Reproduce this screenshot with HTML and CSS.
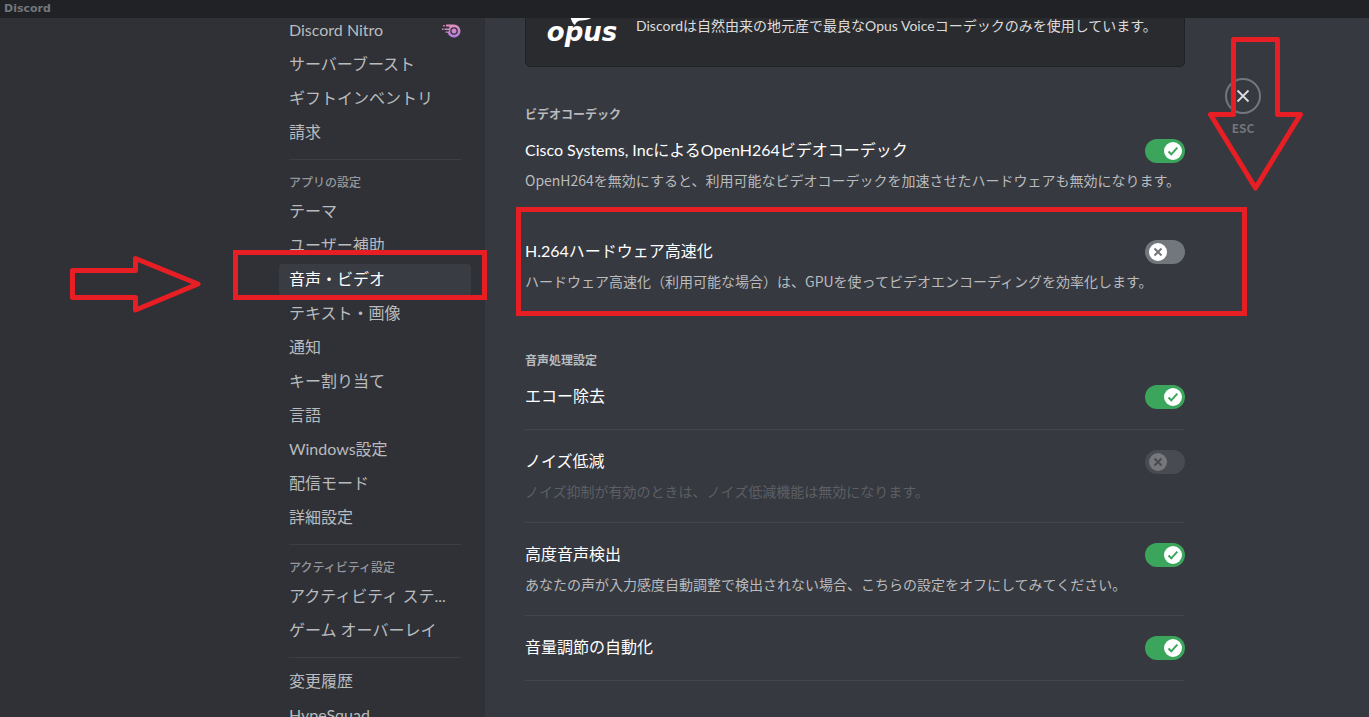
FILE: index.html
```html
<!DOCTYPE html>
<html lang="ja">
<head>
<meta charset="utf-8">
<meta name="viewport" content="width=device-width, initial-scale=1">
<title>Discord</title>
<link rel="stylesheet" href="styles.css">
</head>
<body>
<header class="titlebar">Discord</header>
<div class="settings">
  <aside class="sidebar">
    <nav class="nav">
      <a class="nav-item" href="#"><span class="nav-label">Discord Nitro</span>
        <svg class="nitro" width="20" height="16" viewBox="0 0 20 16" aria-hidden="true">
          <defs><linearGradient id="nitro" x1="0" y1="0" x2="0" y2="1"><stop offset="0" stop-color="#e292bb"/><stop offset="1" stop-color="#b57be0"/></linearGradient></defs>
          <path fill="url(#nitro)" fill-rule="evenodd" d="M5 1.500h8a6.500 6.500 0 1 1-6.300 8.200H4.500V8.500h3.300V7H3.500V5.500h4.800V3.500H5zM13 4.200a3.800 3.800 0 1 0 0 7.600 3.800 3.800 0 0 0 0-7.600zM13 5.500a2.500 2.500 0 1 1 0 5 2.500 2.500 0 0 1 0-5zM1 5.500h1.500V7H1zM2.200 2h1.600v1.500H2.200z"/>
        </svg></a>
      <a class="nav-item" href="#"><span class="nav-label">サーバーブースト</span></a>
      <a class="nav-item" href="#"><span class="nav-label">ギフトインベントリ</span></a>
      <a class="nav-item" href="#"><span class="nav-label">請求</span></a>
      <hr class="nav-rule">
      <h2 class="nav-heading">アプリの設定</h2>
      <a class="nav-item" href="#"><span class="nav-label">テーマ</span></a>
      <a class="nav-item" href="#"><span class="nav-label">ユーザー補助</span></a>
      <a class="nav-item active" href="#" aria-current="page"><span class="nav-label">音声・ビデオ</span></a>
      <a class="nav-item" href="#"><span class="nav-label">テキスト・画像</span></a>
      <a class="nav-item" href="#"><span class="nav-label">通知</span></a>
      <a class="nav-item" href="#"><span class="nav-label">キー割り当て</span></a>
      <a class="nav-item" href="#"><span class="nav-label">言語</span></a>
      <a class="nav-item" href="#"><span class="nav-label">Windows設定</span></a>
      <a class="nav-item" href="#"><span class="nav-label">配信モード</span></a>
      <a class="nav-item" href="#"><span class="nav-label">詳細設定</span></a>
      <hr class="nav-rule">
      <h2 class="nav-heading">アクティビティ設定</h2>
      <a class="nav-item" href="#"><span class="nav-label">アクティビティ ステ...</span></a>
      <a class="nav-item" href="#"><span class="nav-label">ゲーム オーバーレイ</span></a>
      <hr class="nav-rule">
      <a class="nav-item" href="#"><span class="nav-label">変更履歴</span></a>
      <a class="nav-item" href="#"><span class="nav-label">HypeSquad</span></a>
    </nav>
  </aside>
  <main class="main">
    <div class="content">
      <section class="codec-card">
        <div class="opus">
          <svg class="opus-mark" width="28" height="13" viewBox="0 0 28 13" aria-hidden="true"><path fill="#fff" d="M1 0h26c0 5-6 8.500-14 8.500-3 0-5 1.500-6 4.500C4 11.500 3 7 1 0z"/></svg>
          <span class="opus-name">opus</span>
        </div>
        <p class="codec-text">Discordは自然由来の地元産で最良なOpus Voiceコーデックのみを使用しています。</p>
      </section>

      <section class="group">
        <h2 class="group-heading">ビデオコーデック</h2>
        <div class="setting spaced">
          <div class="setting-row">
            <label class="setting-title" for="openh264">Cisco Systems, IncによるOpenH264ビデオコーデック</label>
            <span class="switch"><input type="checkbox" id="openh264" checked><svg class="knob" viewBox="0 0 18 18" aria-hidden="true"><circle cx="9" cy="9" r="9"/><path class="on" d="M4.500 9.500l2.800 2.800 6-6.600"/><path class="off" d="M5.500 5.500l7 7m0-7l-7 7"/></svg></span>
          </div>
          <p class="note">OpenH264を無効にすると、利用可能なビデオコーデックを加速させたハードウェアも無効になります。</p>
        </div>
        <div class="setting">
          <div class="setting-row">
            <label class="setting-title" for="h264">H.264ハードウェア高速化</label>
            <span class="switch"><input type="checkbox" id="h264"><svg class="knob" viewBox="0 0 18 18" aria-hidden="true"><circle cx="9" cy="9" r="9"/><path class="on" d="M4.500 9.500l2.800 2.800 6-6.600"/><path class="off" d="M5.500 5.500l7 7m0-7l-7 7"/></svg></span>
          </div>
          <p class="note">ハードウェア高速化（利用可能な場合）は、GPUを使ってビデオエンコーディングを効率化します。</p>
        </div>
      </section>

      <section class="group">
        <h2 class="group-heading">音声処理設定</h2>
        <div class="setting">
          <div class="setting-row">
            <label class="setting-title" for="echo">エコー除去</label>
            <span class="switch"><input type="checkbox" id="echo" checked><svg class="knob" viewBox="0 0 18 18" aria-hidden="true"><circle cx="9" cy="9" r="9"/><path class="on" d="M4.500 9.500l2.800 2.800 6-6.600"/><path class="off" d="M5.500 5.500l7 7m0-7l-7 7"/></svg></span>
          </div>
        </div>
        <div class="setting disabled">
          <div class="setting-row">
            <label class="setting-title" for="noise">ノイズ低減</label>
            <span class="switch"><input type="checkbox" id="noise" disabled><svg class="knob" viewBox="0 0 18 18" aria-hidden="true"><circle cx="9" cy="9" r="9"/><path class="on" d="M4.500 9.500l2.800 2.800 6-6.600"/><path class="off" d="M5.500 5.500l7 7m0-7l-7 7"/></svg></span>
          </div>
          <p class="note">ノイズ抑制が有効のときは、ノイズ低減機能は無効になります。</p>
        </div>
        <div class="setting">
          <div class="setting-row">
            <label class="setting-title" for="vad">高度音声検出</label>
            <span class="switch"><input type="checkbox" id="vad" checked><svg class="knob" viewBox="0 0 18 18" aria-hidden="true"><circle cx="9" cy="9" r="9"/><path class="on" d="M4.500 9.500l2.800 2.800 6-6.600"/><path class="off" d="M5.500 5.500l7 7m0-7l-7 7"/></svg></span>
          </div>
          <p class="note">あなたの声が入力感度自動調整で検出されない場合、こちらの設定をオフにしてみてください。</p>
        </div>
        <div class="setting">
          <div class="setting-row">
            <label class="setting-title" for="gain">音量調節の自動化</label>
            <span class="switch"><input type="checkbox" id="gain" checked><svg class="knob" viewBox="0 0 18 18" aria-hidden="true"><circle cx="9" cy="9" r="9"/><path class="on" d="M4.500 9.500l2.800 2.800 6-6.600"/><path class="off" d="M5.500 5.500l7 7m0-7l-7 7"/></svg></span>
          </div>
        </div>
      </section>
    </div>
    <div class="close">
      <button class="close-button" type="button" aria-label="ESC"><svg width="18" height="18" viewBox="0 0 18 18" aria-hidden="true"><path d="M3.500 3.500l11 11m0-11l-11 11" stroke="#dcddde" stroke-width="1.800" fill="none"/></svg></button>
      <span class="close-key">ESC</span>
    </div>
  </main>
</div>
<div class="mark mark-nav"></div>
<div class="mark mark-setting"></div>
<svg class="arrow arrow-right" width="134" height="60" viewBox="0 0 134 60" aria-hidden="true"><path d="M3.500 16.500h63V4.500L129 30 66.500 56V43.500h-63z"/></svg>
<svg class="arrow arrow-down" width="98" height="156" viewBox="0 0 98 156" aria-hidden="true"><path d="M26.500 4.500h44V79.500h23L48.500 153 3.500 79.500h23z"/></svg>
</body>
</html>
```
FILE: styles.css
```css
* { box-sizing: border-box; }

body {
  margin: 0;
  height: 100vh;
  display: flex;
  flex-direction: column;
  position: relative;
  overflow: hidden;
  background: #36393f;
  color: #b9bbbe;
  font-family: "Noto Sans CJK JP", "Noto Sans", sans-serif;
  font-size: 16px;
}

h2, p { margin: 0; }

.titlebar {
  flex: none;
  height: 18px;
  padding-left: 4px;
  background: #202225;
  color: #72767d;
  font: bold 11px/18px "DejaVu Sans", sans-serif;
}

.settings {
  flex: 1;
  min-height: 0;
  display: grid;
  grid-template-columns: minmax(218px, 485fr) minmax(0, 884fr);
  overflow: hidden;
}

/* Sidebar */
.sidebar {
  display: flex;
  justify-content: flex-end;
  padding-right: 14px;
  background: #2f3136;
  overflow: hidden;
}

.nav {
  width: 192px;
  margin-top: -3px;
}

.nav-item {
  display: flex;
  align-items: center;
  justify-content: space-between;
  height: 32px;
  margin-bottom: 2px;
  padding: 0 10px;
  border-radius: 4px;
  color: #b9bbbe;
  font-family: Lato, "Noto Sans CJK JP", sans-serif;
  line-height: 20px;
  text-decoration: none;
  white-space: nowrap;
}

.nav-label { padding-bottom: 2px; }

.nav-item.active {
  background: #393c43;
  color: #fff;
}

.nav-rule {
  height: 1px;
  margin: 10px 10px 8px;
  border: 0;
  background: #3c3e44;
}

.nav-heading {
  padding: 6px 10px;
  color: #96989d;
  font-size: 12px;
  font-weight: 500;
  line-height: 16px;
}

/* Content */
.main {
  display: flex;
  align-items: flex-start;
  gap: 40px;
  padding-left: 40px;
  overflow: hidden;
}

.content {
  flex: 0 1 660px;
  min-width: 0;
}

.codec-card {
  display: flex;
  align-items: flex-start;
  gap: 18px;
  height: 89px;
  margin-top: -40px;
  padding: 37px 20px 20px;
  border: 1px solid #202225;
  border-radius: 5px;
  background: #2a2b2f;
}

.opus {
  flex: none;
  width: 72px;
  display: flex;
  flex-direction: column;
  align-items: center;
  color: #fff;
}

.opus-mark { flex: none; margin-top: -4px; }

.opus-name {
  margin-top: -3px;
  font: italic bold 26px/20px "DejaVu Sans", sans-serif;
}

.codec-text {
  color: #dcddde;
  font-family: Lato, "Noto Sans CJK JP", sans-serif;
  font-size: 14px;
  line-height: 20px;
}

.group { margin-top: 39px; }

.group-heading {
  margin-bottom: 17px;
  color: #b9bbbe;
  font-size: 12px;
  font-weight: 700;
  line-height: 16px;
}

.setting {
  margin-bottom: 20px;
  padding-bottom: 20px;
  border-bottom: 1px solid #42454b;
}

.setting.spaced { margin-bottom: 28px; }

.setting-row {
  display: flex;
  align-items: center;
  justify-content: space-between;
}

.setting-title {
  padding-bottom: 2px;
  color: #fff;
  font-family: Lato, "Noto Sans CJK JP", sans-serif;
  line-height: 20px;
}

.note {
  margin-top: 7px;
  padding-bottom: 1px;
  font-size: 14px;
  line-height: 20px;
  white-space: nowrap;
}

.disabled .note { color: #5c5f65; }

.switch {
  display: grid;
  flex: none;
  width: 40px;
  height: 24px;
}

.switch input {
  grid-area: 1 / 1;
  width: 40px;
  height: 24px;
  margin: 0;
  appearance: none;
  border-radius: 12px;
  background: #72767d;
}

.switch input:checked { background: #3ba55c; }

.knob {
  grid-area: 1 / 1;
  align-self: center;
  width: 18px;
  height: 18px;
  margin-left: 4px;
  fill: #fff;
  pointer-events: none;
}

.knob path {
  fill: none;
  stroke: #72767d;
  stroke-width: 2;
}

.knob .on { display: none; stroke: #3ba55c; }

input:checked + .knob { margin-left: 19px; }
input:checked + .knob .on { display: inline; }
input:checked + .knob .off { display: none; }

.disabled .switch input { background: #484b51; }
.disabled .knob { fill: #75777b; }
.disabled .knob path { stroke: #484b51; }

.close {
  flex: none;
  display: flex;
  flex-direction: column;
  align-items: center;
  gap: 5px;
  padding-top: 60px;
}

.close-button {
  display: flex;
  align-items: center;
  justify-content: center;
  width: 36px;
  height: 36px;
  padding: 0;
  border: 2px solid #72767d;
  border-radius: 50%;
  background: none;
}

.close-key {
  color: #72767d;
  font-size: 12px;
  font-weight: 700;
  line-height: 18px;
}

/* Red callouts drawn over the window */
.mark, .arrow {
  position: absolute;
  pointer-events: none;
}

.mark { border: 5px solid #e81e25; }

.mark-nav { left: 233px; top: 250px; width: 254px; height: 50px; }
.mark-setting { left: 516px; top: 207px; width: 731px; height: 109px; }

.arrow {
  fill: none;
  stroke: #e81e25;
  stroke-width: 5;
  stroke-linejoin: round;
}

.arrow-right { left: 69px; top: 254px; }
.arrow-down { left: 1207px; top: 35px; }
```
